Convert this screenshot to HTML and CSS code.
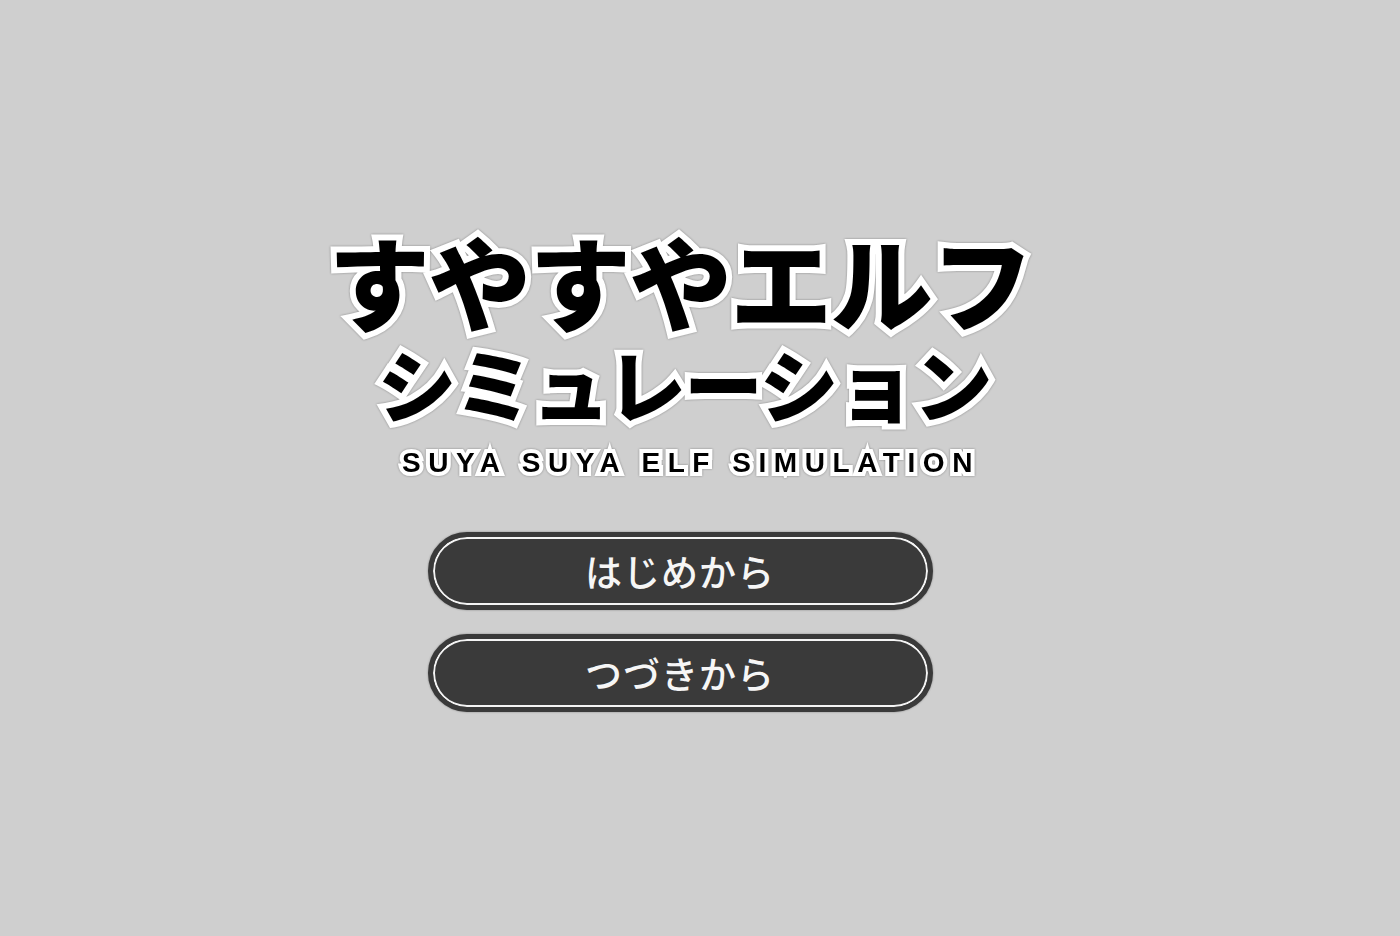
FILE: index.html
```html
<!DOCTYPE html>
<html lang="ja">
<head>
    <meta charset="UTF-8">
    <meta name="viewport" content="width=device-width, initial-scale=1.0">
    <title>すやすやエルフシミュレーション</title>
    <link rel="stylesheet" href="styles.css">
</head>
<body>
    <div class="title-screen">
        <div class="logo">
            <div class="logo-main">すやすやエルフ</div>
            <div class="logo-sub">シミュレーション</div>
            <div class="logo-en">SUYA SUYA ELF SIMULATION</div>
        </div>

        <div class="menu">
            <button class="menu-button">はじめから</button>
            <button class="menu-button">つづきから</button>
        </div>
    </div>
</body>
</html>
```

FILE: styles.css
```css
html, body {
    height: 100%;
}
body {
    margin: 0;
    background: #cfcfcf;
    font-family: "Noto Sans CJK JP", "Noto Sans", sans-serif;
}
.title-screen {
    height: 100%;
    display: flex;
    flex-direction: column;
    align-items: center;
    justify-content: center;
    padding: 5px 40px 0 0;
    box-sizing: border-box;
}
.logo {
    display: flex;
    flex-direction: column;
    align-items: center;
    filter: drop-shadow(0 0 1px rgba(0, 0, 0, 0.35));
}
.logo-main,
.logo-sub,
.logo-en {
    color: #000;
    -webkit-text-stroke: 12px #fff;
    paint-order: stroke fill;
    white-space: nowrap;
}
.logo-main {
    font-size: 102px;
    font-weight: 900;
    line-height: 1;
    letter-spacing: -1.5px;
}
.logo-sub {
    font-size: 79px;
    font-weight: 900;
    line-height: 1;
    letter-spacing: -2px;
    margin: 12px 0 0 8px;
}
.logo-en {
    font-family: "Liberation Sans", Arial, sans-serif;
    font-size: 28px;
    font-weight: bold;
    letter-spacing: 7.55px;
    line-height: 1;
    -webkit-text-stroke: 8px #fff;
    margin: 27px 0 0 22px;
}
.menu {
    display: flex;
    flex-direction: column;
    gap: 24px;
    margin-top: 55px;
}
.menu-button {
    width: 505px;
    height: 78px;
    border: 5px solid #3a3a3a;
    border-radius: 39px;
    background: #3a3a3a;
    box-shadow: inset 0 0 0 2px #f4f4f4, 0 0 2px rgba(0, 0, 0, 0.4);
    color: #f6f6f6;
    font-family: "Noto Sans CJK JP", sans-serif;
    font-size: 37px;
    font-weight: 500;
    letter-spacing: 1px;
    cursor: pointer;
}
.menu-button:hover {
    background: #484848;
}
```
